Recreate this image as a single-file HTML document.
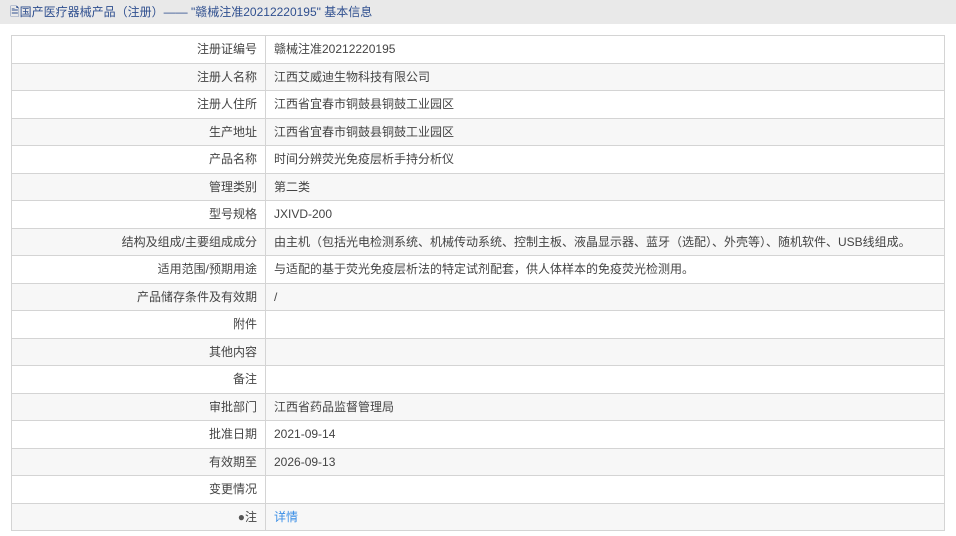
<!DOCTYPE html>
<html><head><meta charset="utf-8"><style>
body{margin:0;width:956px;height:536px;background:#fff;font-family:"Liberation Sans","Noto Sans CJK SC",sans-serif;font-size:12px;color:#444;overflow:hidden}
.hd{height:24px;background:#e9e9e9;line-height:24px;padding-left:10px;color:#2f4f8f;font-size:12px}
table{position:absolute;left:11px;top:35px;width:934px;border-collapse:collapse}
td{border:1px solid #d4d4d4;height:27.5px;padding:0;line-height:26px;box-sizing:border-box}
td.l{width:254px;text-align:right;padding-right:8px}
td.v{padding-left:8px}
tr:nth-child(even) td{background:#f7f7f7}
a{color:#3a8ee6;text-decoration:none}
</style></head><body>
<div class="hd">🗎国产医疗器械产品（注册）—— "赣械注准20212220195" 基本信息</div>
<table>
<tr><td class="l">注册证编号</td><td class="v">赣械注准20212220195</td></tr>
<tr><td class="l">注册人名称</td><td class="v">江西艾威迪生物科技有限公司</td></tr>
<tr><td class="l">注册人住所</td><td class="v">江西省宜春市铜鼓县铜鼓工业园区</td></tr>
<tr><td class="l">生产地址</td><td class="v">江西省宜春市铜鼓县铜鼓工业园区</td></tr>
<tr><td class="l">产品名称</td><td class="v">时间分辨荧光免疫层析手持分析仪</td></tr>
<tr><td class="l">管理类别</td><td class="v">第二类</td></tr>
<tr><td class="l">型号规格</td><td class="v">JXIVD-200</td></tr>
<tr><td class="l">结构及组成/主要组成成分</td><td class="v">由主机（包括光电检测系统、机械传动系统、控制主板、液晶显示器、蓝牙（选配）、外壳等）、随机软件、USB线组成。</td></tr>
<tr><td class="l">适用范围/预期用途</td><td class="v">与适配的基于荧光免疫层析法的特定试剂配套，供人体样本的免疫荧光检测用。</td></tr>
<tr><td class="l">产品储存条件及有效期</td><td class="v">/</td></tr>
<tr><td class="l">附件</td><td class="v"></td></tr>
<tr><td class="l">其他内容</td><td class="v"></td></tr>
<tr><td class="l">备注</td><td class="v"></td></tr>
<tr><td class="l">审批部门</td><td class="v">江西省药品监督管理局</td></tr>
<tr><td class="l">批准日期</td><td class="v">2021-09-14</td></tr>
<tr><td class="l">有效期至</td><td class="v">2026-09-13</td></tr>
<tr><td class="l">变更情况</td><td class="v"></td></tr>
<tr><td class="l"><span style="color:#555">●</span>注</td><td class="v"><a>详情</a></td></tr>
</table>
</body></html>
